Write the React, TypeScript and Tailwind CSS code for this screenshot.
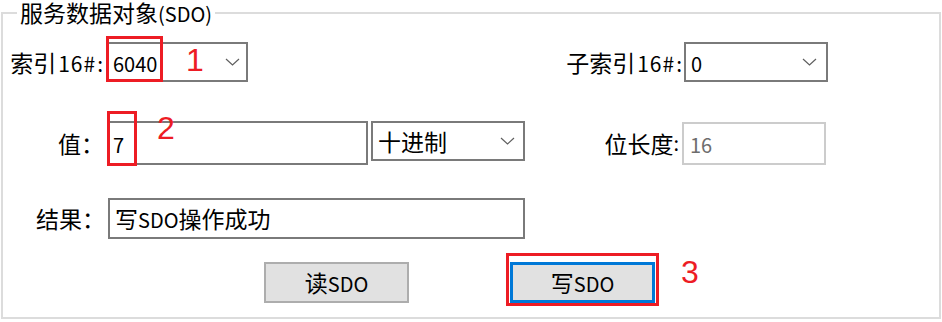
import React from 'react'

// ─── Small pieces ─────────────────────────────────────────────────────────────

/** Latin runs render a bit smaller than the CJK glyphs in this dialog */
function L({ children }: { children: React.ReactNode }) {
  return <span className="text-[20px]">{children}</span>
}

/** the "16#:" suffix of the index labels is a little wider */
function Hex() {
  return (
    <>
      <span className="text-[21px] tracking-[1px] ml-[2px]">16#</span>
      <span className="text-[21px] ml-[1px]">:</span>
    </>
  )
}

function Chevron() {
  return (
    <svg width="15" height="8" viewBox="0 0 15 8" fill="none" className="flex-shrink-0">
      <path d="M1 1L7.5 7L14 1" stroke="#5f5f5f" strokeWidth="1.2" />
    </svg>
  )
}

function Combo({ value, width, pr, children }: { value: React.ReactNode; width: string; pr: string; children?: React.ReactNode }) {
  return (
    <div className={`relative flex items-center justify-between h-[40px] border-2 border-[#7a7a7a] bg-white pl-[5px] ${width} ${pr}`}>
      <span className="leading-none">{value}</span>
      <Chevron />
      {children}
    </div>
  )
}

const redBox = 'absolute border-[3px] border-[#ed1c24] pointer-events-none'
const redNum = "absolute text-[32px] leading-none text-[#ed1c24] font-['Liberation_Sans',Arial,sans-serif]"

// ─── Component ────────────────────────────────────────────────────────────────

export default function App() {
  return (
    <div className="w-[942px] h-[322px] bg-white text-[23px] text-black font-['Noto_Sans_CJK_SC','Noto_Sans',sans-serif] overflow-hidden">
      <div className="pt-[12px] pl-[1px]">
        <div className="relative w-[940px] h-[307px] border-2 border-[#dcdcdc]">
          {/* group title sits on the top border */}
          <span className="absolute -top-[14px] left-[14px] bg-white px-[3px] leading-[24px]">
            服务数据对象<L>(SDO)</L>
          </span>

          {/* ── Row 1: index / sub-index ── */}
          <div className="flex items-center mt-[28px] h-[40px]">
            <div className="w-[100px] text-right leading-none whitespace-nowrap">索引<Hex /></div>
            <div className="ml-[3px]">
              <Combo value={<L>6040</L>} width="w-[142px]" pr="pr-[6px]">
                <div className={`${redBox} -left-[2px] -top-[8px] w-[57px] h-[46px]`} />
                <span className={`${redNum} left-[78px] top-0`}>1</span>
              </Combo>
            </div>
            <div className="w-[434px] text-right leading-none whitespace-nowrap">子索引<Hex /></div>
            <div className="ml-[2px]">
              <Combo value={<L>0</L>} width="w-[144px]" pr="pr-[9px]" />
            </div>
          </div>

          {/* ── Row 2: value / radix / bit length ── */}
          <div className="flex items-start mt-[39px]">
            <div className="w-[101px] h-[44px] flex items-center justify-end leading-none">值：</div>
            <div className="relative ml-[3px] w-[261px] h-[44px] border-2 border-[#7a7a7a] flex items-center pl-[4px]">
              <span className="leading-none"><L>7</L></span>
              <div className={`${redBox} -left-[2px] -top-[12px] w-[30px] h-[55px]`} />
              <span className={`${redNum} left-[48px] -top-[11px]`}>2</span>
            </div>
            <div className="ml-[3px]">
              <Combo value="十进制" width="w-[154px]" pr="pr-[8px]" />
            </div>
            <div className="w-[154px] h-[44px] flex items-center justify-end leading-none">位长度<L>:</L></div>
            <div className="ml-[3px] mt-[1px] w-[144px] h-[43px] border-2 border-[#cccccc] flex items-center pl-[6px] text-[#6d6d6d]">
              <span className="leading-none"><L>16</L></span>
            </div>
          </div>

          {/* ── Row 3: result ── */}
          <div className="flex items-center mt-[33px] h-[41px]">
            <div className="w-[102px] text-right leading-none">结果：</div>
            <div className="ml-[3px] w-[417px] h-[41px] border-2 border-[#7a7a7a] flex items-center pl-[5px]">
              <span className="leading-none">写<L>SDO</L>操作成功</span>
            </div>
          </div>

          {/* ── Row 4: buttons ── */}
          <div className="flex items-start mt-[23px]">
            <button className="ml-[261px] w-[145px] h-[41px] bg-[#e1e1e1] border-2 border-[#adadad] leading-none">
              读<L>SDO</L>
            </button>
            <div className="relative ml-[101px] w-[145px] h-[41px]">
              <button className="w-full h-full bg-[#e1e1e1] border-[3px] border-[#0078d7] leading-none">
                写<L>SDO</L>
              </button>
              <div className={`${redBox} -left-[4px] -top-[9px] w-[153px] h-[53px]`} />
            </div>
            <span className="ml-[26px] -mt-[6px] text-[32px] leading-none text-[#ed1c24] font-['Liberation_Sans',Arial,sans-serif]">
              3
            </span>
          </div>
        </div>
      </div>
    </div>
  )
}
